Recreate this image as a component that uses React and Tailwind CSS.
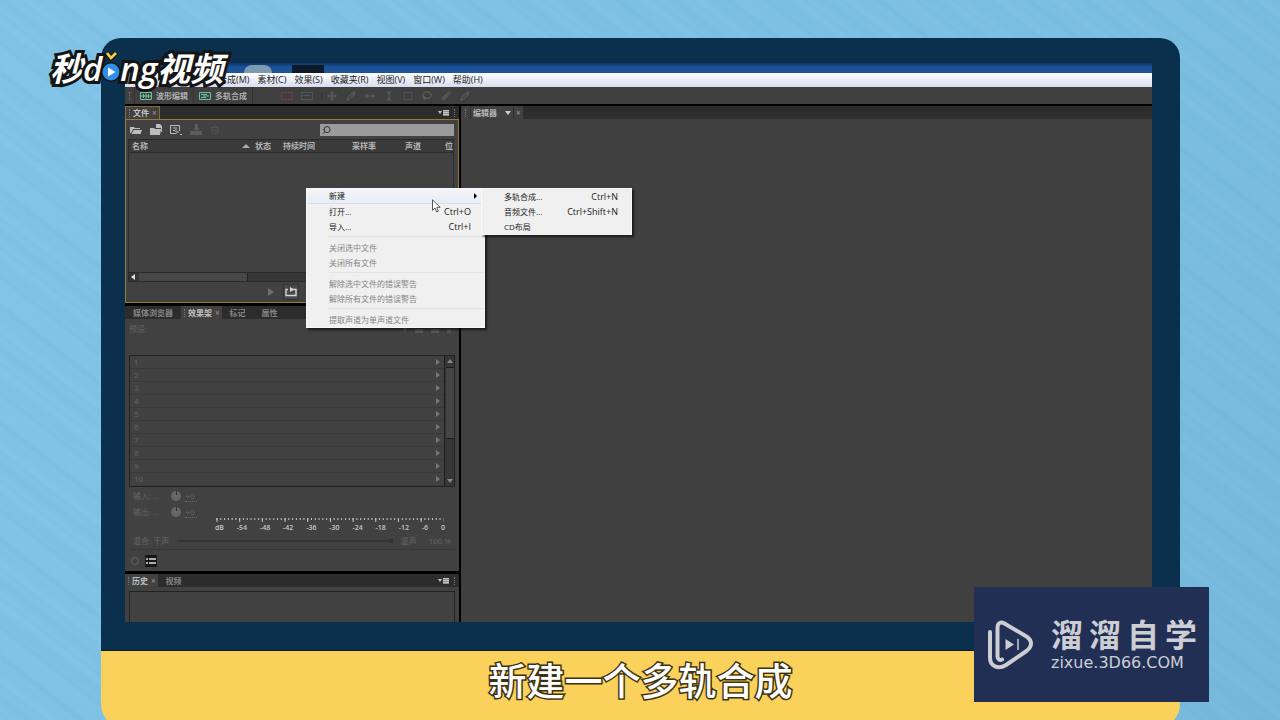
import React, { useState } from 'react';
import {
  Brush,
  FolderOpen,
  Lasso,
  Move,
  MoveHorizontal,
  Pencil,
  Search,
  SquareDashed,
  TextCursor,
  Trash2,
} from 'lucide-react';

const MENUS = ['素材(C)', '效果(S)', '收藏夹(R)', '视图(V)', '窗口(W)', '帮助(H)'];

const CONTEXT_MENU = [
  [
    { label: '新建', submenu: true },
    { label: '打开...', keys: 'Ctrl+O' },
    { label: '导入...', keys: 'Ctrl+I' },
  ],
  [
    { label: '关闭选中文件', disabled: true },
    { label: '关闭所有文件', disabled: true },
  ],
  [
    { label: '解除选中文件的错误警告', disabled: true },
    { label: '解除所有文件的错误警告', disabled: true },
  ],
  [{ label: '提取声道为单声道文件', disabled: true }],
];

const SUBMENU = [
  { label: '多轨合成...', keys: 'Ctrl+N' },
  { label: '音频文件...', keys: 'Ctrl+Shift+N' },
  { label: 'CD布局' },
];

const METER = ['dB', '-54', '-48', '-42', '-36', '-30', '-24', '-18', '-12', '-6', '0'];
const RACK = [1, 2, 3, 4, 5, 6, 7, 8, 9, 10];

function Grip() {
  return <span className="mx-1 h-2 w-px shrink-0 border-l border-dotted border-[#777]" />;
}

function PanelMenuIcon() {
  return (
    <svg className="h-2 w-3" viewBox="0 0 12 8" fill="#c4c4c4">
      <path d="M0 2h4L2 5z" />
      <path d="M5 1h6v6H5z" fill="#8d8d8d" />
      <path d="M5 1h6v1H5zM5 3h6v1H5zM5 5h6v1H5z" />
    </svg>
  );
}

function WaveIcon({ multi }) {
  return (
    <svg className="h-2 w-3" viewBox="0 0 12 8" fill="none" stroke="#6fc3a0">
      <path d="M.5.5h11v7H.5z" />
      {multi ? (
        <path d="M2 2.5h6M4 4h6M2 5.5h5" />
      ) : (
        <path d="M1 4h10M3.5 2v4M6 1.5v5M8.5 2v4" />
      )}
    </svg>
  );
}

function Tab({ children, active, closable, onClick }) {
  return (
    <button
      type="button"
      onClick={onClick}
      className={
        active
          ? 'flex h-full items-center gap-[3px] bg-[#414141] pr-[2px] font-bold text-[#c0c0c0]'
          : 'flex h-full items-center px-2 font-bold text-[#858585]'
      }
    >
      {active && <span className="ml-[3px] h-2 border-l border-dotted border-[#777]" />}
      {children}
      {closable && <span className="text-[#888]">×</span>}
    </button>
  );
}

function TitleBar() {
  return (
    <div className="flex h-[10px] shrink-0 items-end overflow-hidden bg-linear-to-b from-[#0b3565] to-[#1b5298] to-40% pl-[119px]">
      <span className="h-2 w-7 rounded-t-full bg-[#7c9bb0]" />
      <span className="ml-5 h-2 w-8 bg-[#10192a]" />
    </div>
  );
}

function MenuBar() {
  return (
    <nav className="flex h-[14px] shrink-0 items-center gap-2 bg-linear-to-b from-white to-[#d9dcf0] pb-px pl-[93px] text-[9px] leading-none text-[#1c1c1c]">
      <button type="button">合成(M)</button>
      {MENUS.map((menu) => (
        <button type="button" key={menu}>{menu}</button>
      ))}
    </nav>
  );
}

function Toolbar() {
  const tools = [Move, Pencil, MoveHorizontal, TextCursor, SquareDashed, Lasso, Brush, Pencil];
  return (
    <div className="flex h-[19px] shrink-0 items-center border-b-2 border-black bg-[#3f3f3f] text-[8px] font-bold leading-none text-[#adadad]">
      <Grip />
      <button type="button" className="flex h-full items-center gap-1 border-x border-[#303030] px-[5px]">
        <WaveIcon />
        波形编辑
      </button>
      <button type="button" className="flex h-full items-center gap-1 border-r border-[#303030] px-[5px]">
        <WaveIcon multi />
        多轨合成
      </button>
      <div className="ml-7 flex gap-2 border-r border-[#303030] pr-2">
        <button type="button" aria-label="频谱" className="h-2 w-3 border border-[#703f42]" />
        <button type="button" aria-label="音高" className="flex h-2 w-3 items-center justify-center border border-[#515560]">
          <span className="h-px w-2 bg-[#515560]" />
        </button>
      </div>
      <div className="flex">
        {tools.map((Icon, i) => (
          <button type="button" key={i} className="flex w-[19px] justify-center text-[#6c6c6c]">
            <Icon size={10} strokeWidth={2} />
          </button>
        ))}
      </div>
    </div>
  );
}

function FilePanel() {
  return (
    <section className="flex h-[197px] shrink-0 flex-col">
      <div className="flex h-[13px] items-center bg-[#2c2c2c] text-[8px] leading-none">
        <div className="h-full border border-b-0 border-[#8a6d30]">
          <Tab active closable>文件</Tab>
        </div>
        <span className="ml-auto"><PanelMenuIcon /></span>
        <Grip />
      </div>
      <div className="flex grow flex-col border border-[#9a7a38] bg-[#414141] pl-[2px] pr-1">
        <div className="flex h-[19px] items-center gap-2 pl-[2px] text-[#bdbdbd]">
          <button type="button" aria-label="打开文件">
            <svg className="h-3 w-3" viewBox="0 0 12 12" fill="#bdbdbd">
              <path d="M0 3h4l1 1h5v1H3L1 9H0zM3.500 6H12l-1.500 4H1.500z" />
            </svg>
          </button>
          <button type="button" aria-label="导入文件">
            <svg className="h-3 w-3" viewBox="0 0 12 12" fill="#bdbdbd">
              <path d="M0 4h4l1 1h6l-1 6H0zM6 0h4l2 2v6h-1V4H6z" />
            </svg>
          </button>
          <button type="button" aria-label="新建文件">
            <svg className="h-3 w-3" viewBox="0 0 12 12" fill="none" stroke="#bdbdbd">
              <path d="M9.500 7V1.500H.5v8h6M3 4h4M3 6.500h2M6 5v3h3M10 10.500h2" />
            </svg>
          </button>
          <button type="button" aria-label="插入">
            <svg className="h-3 w-3" viewBox="0 0 12 12" fill="#5c5c5c">
              <path d="M5 0h3v4h2L6.500 7 3 4h2zM0 7h12v4H0z" />
            </svg>
          </button>
          <button type="button" aria-label="删除" className="text-[#565656]"><Trash2 size={10} /></button>
          <label className="ml-auto flex h-3 w-[134px] items-center bg-[#9b9b9b] pl-[2px] text-[#333]">
            <Search size={10} strokeWidth={2.500} className="-scale-x-100" />
            <input type="text" aria-label="搜索" className="h-3 w-full min-w-0 bg-transparent text-[8px] outline-none" />
          </label>
        </div>
        <div className="grow border-x border-[#2d2d2d]">
          <table className="w-full table-fixed text-left text-[8px] leading-none text-[#b5b5b5]">
            <thead>
              <tr className="h-[13px] border-y border-[#2a2a2a] bg-[#3a3a3a]">
                <th className="pl-[3px]">
                  <span className="flex items-center justify-between pr-[5px]">
                    名称
                    <svg className="h-1 w-2" viewBox="0 0 8 4" fill="#aaa"><path d="M0 4h8L4 0z" /></svg>
                  </span>
                </th>
                <th className="w-7">状态</th>
                <th className="w-[69px]">持续时间</th>
                <th className="w-[53px]">采样率</th>
                <th className="w-10">声道</th>
                <th className="w-2">位</th>
              </tr>
            </thead>
          </table>
        </div>
        <div className="flex h-[10px] items-center border border-[#2a2a2a] bg-[#363636]">
          <svg className="ml-[2px] mr-1 h-[6px] w-1" viewBox="0 0 4 6" fill="#ddd"><path d="M4 0v6L0 3z" /></svg>
          <span className="h-full w-[109px] border-r border-[#222] bg-[#474747]" />
        </div>
        <div className="flex h-5 items-center pl-[139px]">
          <button type="button" aria-label="播放">
            <svg className="h-2 w-2" viewBox="0 0 8 8" fill="#707070"><path d="M1 0l6 4-6 4z" /></svg>
          </button>
          <button type="button" aria-label="循环播放" className="ml-2 flex h-4 w-4 items-center justify-center border border-[#333] bg-[#484848]">
            <svg className="h-[10px] w-3" viewBox="0 0 12 10" fill="none" stroke="#d5d5d5" strokeWidth="1.400">
              <path d="M3 2.500H1v6h10v-6H7" />
              <path d="M5 0l4 2.500L5 5z" fill="#d5d5d5" stroke="none" />
            </svg>
          </button>
        </div>
      </div>
    </section>
  );
}

function GainRow({ label }) {
  return (
    <label className="flex h-3 items-center pl-1">
      {label}
      <span className="ml-3 flex h-[10px] w-[10px] justify-center rounded-full bg-[#666]">
        <span className="h-1 w-px bg-[#333]" />
      </span>
      <input type="text" defaultValue="+0" className="ml-1 w-3 border-b border-dotted border-[#6a6a6a] bg-transparent leading-none outline-none" />
    </label>
  );
}

function EffectsPanel() {
  const [tab, setTab] = useState('效果架');
  return (
    <section className="flex shrink-0 flex-col bg-[#414141] text-[8px] leading-none">
      <div className="flex h-[13px] items-center bg-[#2c2c2c]">
        {['媒体浏览器', '效果架', '标记', '属性'].map((name) => (
          <Tab key={name} active={tab === name} closable={tab === name} onClick={() => setTab(name)}>
            {name}
          </Tab>
        ))}
      </div>
      <div className="flex flex-col px-1 text-[#656565]">
        <div className="flex h-9 items-start gap-2 pt-[6px]">
          <span>预设:</span>
          <span className="ml-auto">▾</span>
          <span className="mt-1 h-1 w-2 bg-[#555]" />
          <span className="mt-1 h-1 w-2 bg-[#555]" />
          <span className="mt-1 mr-1 h-1 w-1 bg-[#555]" />
        </div>
        <div className="flex border border-[#222]">
          <ol className="grow">
            {RACK.map((n) => (
              <li key={n} className="flex h-[13px] items-center border-b border-[#3a3a3a] pl-1">
                {n}
                <button type="button" aria-label={`效果 ${n}`} className="ml-auto mr-1">
                  <svg className="h-[6px] w-1" viewBox="0 0 4 6" fill="#777"><path d="M0 0v6l4-3z" /></svg>
                </button>
              </li>
            ))}
          </ol>
          <div className="flex w-[10px] flex-col items-center justify-between border-l border-[#1c1c1c] bg-[#363636] py-[3px]">
            <svg className="h-1 w-[6px] shrink-0" viewBox="0 0 6 4" fill="#888"><path d="M0 4h6L3 0z" /></svg>
            <span className="mb-10 mt-1 w-2 grow border-y border-[#1c1c1c] bg-[#454545]" />
            <svg className="h-1 w-[6px] shrink-0" viewBox="0 0 6 4" fill="#888"><path d="M0 0h6L3 4z" /></svg>
          </div>
        </div>
        <div className="flex flex-col gap-1 pt-[3px]">
          <GainRow label="输入: ..." />
          <GainRow label="输出: ..." />
        </div>
        <div className="ml-[86px] mr-[10px] text-[7px] font-semibold text-[#c8c8c8]">
          <svg className="mx-auto h-1 w-[228px]" viewBox="0 0 228 4" stroke="#c8c8c8">
            <path d="M.5 1h227" strokeWidth="2" strokeDasharray="1 2.780" />
            <path d="M.5 2h227" strokeWidth="4" strokeDasharray="1 21.680" />
          </svg>
          <div className="flex h-[10px] items-center justify-between">
            {METER.map((mark) => (
              <span key={mark}>{mark}</span>
            ))}
          </div>
        </div>
        <label className="flex h-[18px] items-center border-b border-[#363636] px-1">
          混合: 干声
          <input
            type="range"
            defaultValue="100"
            className="mx-2 h-[2px] min-w-0 grow appearance-none bg-[#343434] [&::-webkit-slider-thumb]:h-1 [&::-webkit-slider-thumb]:w-1 [&::-webkit-slider-thumb]:appearance-none [&::-webkit-slider-thumb]:bg-[#333]"
          />
          湿声
          <span className="ml-3">100 %</span>
        </label>
        <div className="flex h-[21px] items-center gap-1">
          <button type="button" aria-label="启用" className="mx-[2px] h-2 w-2 rounded-full border border-[#666]" />
          <button type="button" aria-label="列表" className="flex h-3 w-3 items-center justify-center bg-[#161616]">
            <svg className="h-2 w-[10px]" viewBox="0 0 10 8" stroke="#e0e0e0" strokeWidth="1.500">
              <path d="M0 2h2M3 2h7M0 6h2M3 6h7" />
            </svg>
          </button>
        </div>
      </div>
    </section>
  );
}

function HistoryPanel() {
  return (
    <section className="flex grow flex-col bg-[#414141] text-[8px] leading-none">
      <div className="flex h-[13px] items-center bg-[#2c2c2c]">
        <Tab active closable>历史</Tab>
        <Tab>视频</Tab>
        <span className="ml-auto"><PanelMenuIcon /></span>
        <Grip />
      </div>
      <div className="mx-1 mt-1 grow border border-b-0 border-[#222]" />
    </section>
  );
}

function EditorPanel() {
  return (
    <section className="grow bg-[#404040]">
      <div className="flex h-[13px] items-center bg-linear-to-b from-[#2a2a2a] to-[#303030] text-[8px] font-bold leading-none text-[#b5b5b5]">
        <div className="flex h-full items-center bg-[#414141] pr-[2px]">
          <Grip />
          <button type="button" className="flex h-full items-center gap-2 border-x border-[#303030] px-[2px]">
            编辑器
            <svg className="h-1 w-[6px]" viewBox="0 0 6 4" fill="#ccc"><path d="M0 0h6L3 4z" /></svg>
          </button>
          <span className="ml-[2px] text-[#888]">×</span>
        </div>
      </div>
    </section>
  );
}

function MenuItem({ item, active }) {
  return (
    <li>
      <button
        type="button"
        disabled={item.disabled}
        className={
          active
            ? 'flex h-[15px] w-full items-center border-b border-[#cfe0ec] bg-linear-to-b from-[#f3f5f9] to-[#e8eef5] pl-[22px] pr-[7px]'
            : 'flex h-[15px] w-full items-center pl-[22px] pr-[13px] disabled:text-[#858585]'
        }
      >
        {item.label}
        <span className="ml-auto text-[9px]">{item.keys}</span>
        {item.submenu && (
          <svg className="h-[6px] w-[3px]" viewBox="0 0 3 6"><path d="M0 0v6l3-3z" /></svg>
        )}
      </button>
    </li>
  );
}

function ContextMenu() {
  return (
    <div className="absolute left-[181px] top-[125px] z-10 text-[8px] leading-none text-[#222]">
      <div className="w-[179px] border border-[#f8f8f8] bg-[#f0f0f0] shadow-[2px_2px_2px_rgba(0,0,0,0.6)]">
        {CONTEXT_MENU.map((group, i) => (
          <ul key={i}>
            {i > 0 && <li className="mb-[3px] ml-[22px] mt-[2px] h-px bg-[#e3e3e3]" />}
            {group.map((item) => (
              <MenuItem key={item.label} item={item} active={item.submenu} />
            ))}
          </ul>
        ))}
      </div>
      <ul className="absolute left-[175px] top-0 w-[151px] border border-[#f8f8f8] bg-[#f0f0f0] shadow-[2px_2px_2px_rgba(0,0,0,0.6)]">
        {SUBMENU.map((item) => (
          <MenuItem key={item.label} item={item} />
        ))}
      </ul>
      <svg className="absolute left-[126px] top-[11px] h-[14px] w-[9px]" viewBox="0 0 9 14" fill="#fff" stroke="#444" strokeWidth="0.900">
        <path d="M.5.800v10.500l2.500-2.300 1.700 4 1.700-.8L4.800 8.300h3.400z" />
      </svg>
    </div>
  );
}

function ChannelLogo() {
  return (
    <div className="absolute left-[50px] top-[44px] z-20 flex h-12 items-center text-[33px] italic leading-none text-white [-webkit-text-stroke:6px_#151515] [paint-order:stroke_fill]">
      <span className="font-bold">秒</span>
      <span className="font-['Open_Sans'] font-semibold">d</span>
      <svg className="-mx-[2px] mb-1 h-8 w-[22px] shrink-0" viewBox="0 0 22 32">
        <path d="M7 3l4 5 5-5" fill="none" stroke="#151515" strokeWidth="5" />
        <circle cx="11" cy="22" r="10" fill="#151515" />
        <path d="M7 3l4 5 5-5" fill="none" stroke="#f6cf3e" strokeWidth="2.800" />
        <circle cx="11" cy="22" r="8.500" fill="#2f8fe8" />
        <path d="M8 17.500v9l7.500-4.500z" fill="#fff" />
      </svg>
      <span className="font-['Open_Sans'] font-semibold">ng</span>
      <span className="font-bold">视频</span>
    </div>
  );
}

function Watermark() {
  return (
    <div className="absolute bottom-[18px] right-[71px] z-20 flex h-[115px] w-[235px] items-center gap-4 bg-[#212f55] pl-[13px] text-[#ccced4]">
      <svg className="h-[50px] w-12 shrink-0" viewBox="0 0 48 50" fill="none" stroke="currentColor" strokeWidth="4" strokeLinecap="round">
        <path d="M15 39.500c-2 1-4.500 0-4.500-3V8c0-5 3-6.500 7-4.500l22 13c6 4 6 10 0 14.500L19 45c-8 5-16 1-16-7V12" strokeLinejoin="round" />
        <path d="M18.500 19v11l8.500-5.500z" fill="currentColor" stroke="none" />
        <path d="M31 19.500v10" strokeWidth="1.500" />
      </svg>
      <div className="flex flex-col">
        <p className="flex gap-[6px] text-[32px] font-bold leading-8">
          <span>溜</span>
          <span>溜</span>
          <span>自</span>
          <span>学</span>
        </p>
        <p className="mt-1 font-['DejaVu_Sans'] text-[16px] leading-4">zixue.3D66.COM</p>
      </div>
    </div>
  );
}

function App() {
  return (
    <div className="relative flex min-h-screen flex-col overflow-hidden bg-[#7dc0e4] bg-[repeating-linear-gradient(38deg,transparent_0px,rgba(60,140,185,0.06)_5px,transparent_8px,rgba(60,140,185,0.04)_17px,transparent_23px),repeating-linear-gradient(37deg,transparent_0px,rgba(60,140,185,0.06)_19px,transparent_31px),linear-gradient(115deg,#84c6e9_0%,#7ec1e4_70%,#78badd_100%)] pl-[101px] pr-[100px] pt-[38px] font-['Open_Sans','Noto_Sans_CJK_SC',sans-serif]">
      <ChannelLogo />

      {/* Monitor frame */}
      <main className="flex grow flex-col rounded-t-[20px] border-b border-[#0a1c2c] bg-[#0b304e] pb-7 pl-6 pr-7 pt-[25px]">
        <div className="relative flex grow flex-col bg-black">
          <TitleBar />
          <MenuBar />
          <Toolbar />
          <div className="flex grow">
            <div className="mr-[2px] flex w-[334px] shrink-0 flex-col gap-[3px]">
              <FilePanel />
              <EffectsPanel />
              <HistoryPanel />
            </div>
            <EditorPanel />
          </div>
          <ContextMenu />
        </div>
      </main>

      {/* Subtitle */}
      <footer className="-mb-2 flex h-[77px] shrink-0 items-center justify-center rounded-b-[24px] bg-[#fad15a] pb-5 text-[38px] font-medium leading-none text-white [-webkit-text-stroke:3px_#3c3212] [paint-order:stroke_fill]">
        <p>新建一个多轨合成</p>
      </footer>

      <Watermark />
    </div>
  );
}

export default App;
